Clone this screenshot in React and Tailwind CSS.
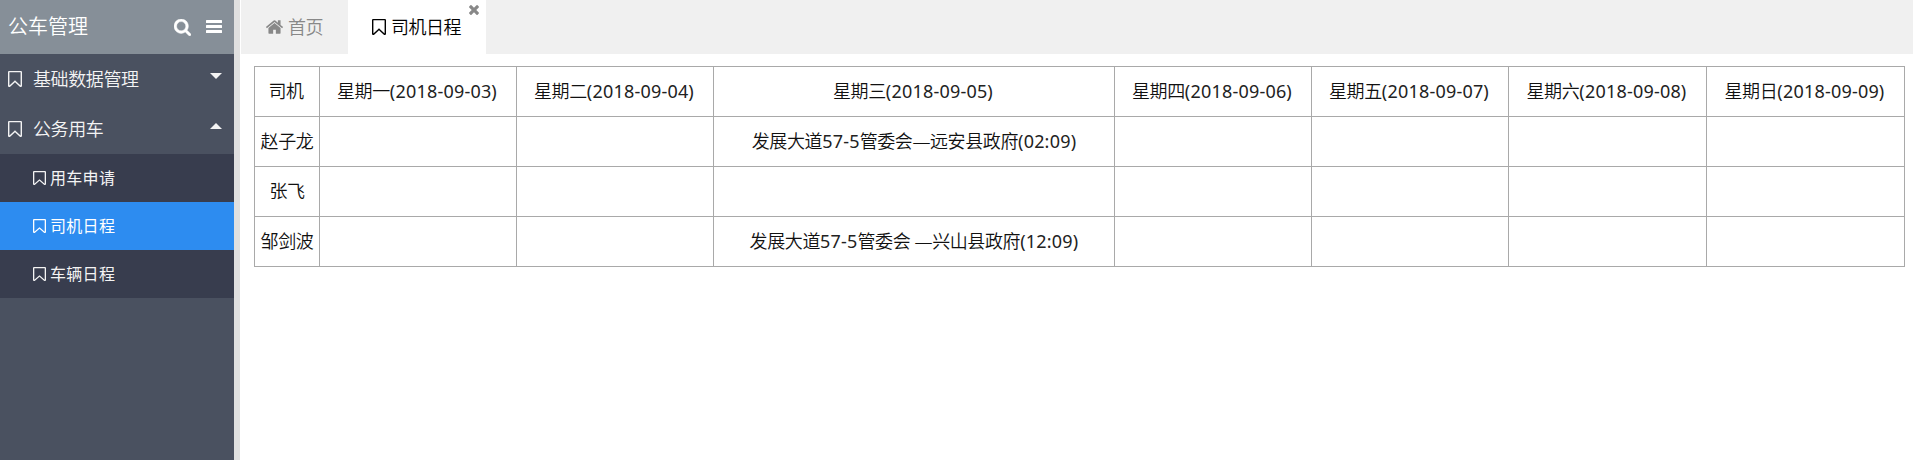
import React from 'react';

const days = [
  { name: '星期一', date: '(2018-09-03)' },
  { name: '星期二', date: '(2018-09-04)' },
  { name: '星期三', date: '(2018-09-05)' },
  { name: '星期四', date: '(2018-09-06)' },
  { name: '星期五', date: '(2018-09-07)' },
  { name: '星期六', date: '(2018-09-08)' },
  { name: '星期日', date: '(2018-09-09)' },
];

const drivers = [
  { name: '赵子龙', trips: { 2: '发展大道57-5管委会—远安县政府(02:09)' } },
  { name: '张飞', trips: {} },
  { name: '邹剑波', trips: { 2: '发展大道57-5管委会 —兴山县政府(12:09)' } },
];

const subMenu = [
  { label: '用车申请', active: false },
  { label: '司机日程', active: true },
  { label: '车辆日程', active: false },
];

const BookmarkIcon = ({ className }) => (
  <svg viewBox="256 128 1280 1512" preserveAspectRatio="none" fill="currentColor" className={className}>
    <path d="M1408 256h-1024v1242l423-406 89-85 89 85 423 406v-1242zm12-128q23 0 44 9 33 13 52.5 41t19.5 62v1289q0 34-19.5 62t-52.5 41q-19 8-44 8-48 0-83-32l-441-424-441 424q-36 33-83 33-23 0-44-9-33-13-52.5-41t-19.5-62v-1289q0-34 19.5-62t52.5-41q21-9 44-9h1048z" />
  </svg>
);

const SearchIcon = ({ className }) => (
  <svg viewBox="64 128 1664 1664" fill="currentColor" stroke="currentColor" strokeWidth="40" className={className}>
    <path d="M1216 832q0-185-131.5-316.5t-316.5-131.5-316.5 131.5-131.5 316.5 131.5 316.5 316.5 131.5 316.5-131.5 131.5-316.5zm512 832q0 52-38 90t-90 38q-54 0-90-38l-343-342q-179 124-399 124-143 0-273.5-55.5t-225-150-150-225-55.5-273.5 55.5-273.5 150-225 225-150 273.5-55.5 273.5 55.5 225 150 150 225 55.5 273.5q0 220-124 399l343 343q37 37 37 90z" />
  </svg>
);

const BarsIcon = ({ className }) => (
  <svg viewBox="0 0 16 13" fill="currentColor" className={className}>
    <rect width="16" height="3" rx="0.5" />
    <rect y="5" width="16" height="3" rx="0.5" />
    <rect y="10" width="16" height="3" rx="0.5" />
  </svg>
);

const HomeIcon = ({ className }) => (
  <svg viewBox="89 253 1614 1283" fill="currentColor" className={className}>
    <path d="M1472 992v480q0 26-19 45t-45 19h-384v-384h-256v384h-384q-26 0-45-19t-19-45v-480q0-1 .5-3t.5-3l575-474 575 474q1 2 1 6zm223-69l-62 74q-8 9-21 11h-3q-13 0-21-7l-692-577-692 577q-12 8-24 7-13-2-21-11l-62-74q-8-10-7-23.5t11-21.5l719-599q32-26 76-26t76 26l244 204v-195q0-14 9-23t23-9h192q14 0 23 9t9 23v408l219 182q10 8 11 21.5t-7 23.5z" />
  </svg>
);

const CloseIcon = ({ className }) => (
  <svg viewBox="302 366 1188 1188" fill="currentColor" className={className}>
    <path d="M1490 1322q0 40-28 68l-136 136q-28 28-68 28t-68-28l-294-294-294 294q-28 28-68 28t-68-28l-136-136q-28-28-28-68t28-68l294-294-294-294q-28-28-28-68t28-68l136-136q28-28 68-28t68 28l294 294 294-294q28-28 68-28t68 28l136 136q28 28 28 68t-28 68l-294 294 294 294q28 28 28 68z" />
  </svg>
);

const Caret = ({ up }) => (
  <svg viewBox="0 0 12 6" fill="currentColor" className="mb-1.5 h-1.5 w-3">
    <path d={up ? 'M0 6L6 0L12 6Z' : 'M0 0L6 6L12 0Z'} />
  </svg>
);

// Latin runs are spaced differently from the Chinese ones
const Mixed = ({ text }) =>
  text.split(/([0-9:()-]+)/).map((part, i) => (
    <span key={i} className={i % 2 ? 'font-normal tracking-[0.2px] text-[#222]' : 'tracking-[-0.4px]'}>
      {part}
    </span>
  ));

const MenuGroup = ({ label, open }) => (
  <div className="flex h-[50px] items-center pb-px pl-2 pr-3">
    <BookmarkIcon className="mr-[11px] h-4 w-[14px]" />
    <span className="flex-1 text-lg tracking-[-0.4px]">{label}</span>
    <Caret up={open} />
  </div>
);

const Sidebar = () => (
  <aside className="w-[234px] shrink-0 bg-[#4a5160] text-[#f4f4f4]">
    <div className="flex h-[54px] items-center bg-[#868f98] pl-2 pr-3 text-white">
      <span className="flex-1 text-xl">公车管理</span>
      <SearchIcon className="mr-[15px] size-[17px]" />
      <BarsIcon className="mb-px h-[13px] w-4" />
    </div>
    <MenuGroup label="基础数据管理" />
    <MenuGroup label="公务用车" open />
    {subMenu.map((item) => (
      <div
        key={item.label}
        className={`flex h-12 items-center pl-[33px] text-base ${item.active ? 'bg-[#2d8cf0] text-white' : 'bg-[#383d4e]'}`}
      >
        <BookmarkIcon className="mr-1 h-[14px] w-[13px]" />
        <span className="font-normal tracking-[0.3px]">{item.label}</span>
      </div>
    ))}
  </aside>
);

const Tabs = () => (
  <div className="ml-px flex h-[54px] bg-[#f0f0f0] text-lg tracking-[-0.5px]">
    <div className="flex w-[107px] items-center pb-px pl-[25px] text-[#888]">
      <HomeIcon className="mr-[5px] h-[14px] w-[17px]" />
      <span>首页</span>
    </div>
    <div className="relative flex w-[138px] items-center bg-white pb-px pl-6 text-black">
      <BookmarkIcon className="mr-[5px] h-4 w-[14px]" />
      <span>司机日程</span>
      <CloseIcon className="absolute right-[7px] top-[5px] size-2.5 text-[#888]" />
    </div>
  </div>
);

const Schedule = () => (
  <table className="ml-[14px] mt-3 w-[1651px] table-fixed border-collapse text-center text-lg text-[#111]">
    <colgroup>
      <col className="w-[65px]" />
      <col className="w-[197px]" />
      <col className="w-[197px]" />
      <col className="w-[401px]" />
      <col className="w-[197px]" />
      <col className="w-[197px]" />
      <col className="w-[198px]" />
      <col className="w-[198px]" />
    </colgroup>
    <tbody>
      <tr className="h-[50px]">
        <td className="border border-[#a9a9a9] pb-0.5 pr-0.5 tracking-[-0.4px]">司机</td>
        {days.map((day) => (
          <td key={day.name} className="whitespace-nowrap border border-[#a9a9a9] pb-0.5 pr-0.5">
            <Mixed text={day.name + day.date} />
          </td>
        ))}
      </tr>
      {drivers.map((driver) => (
        <tr key={driver.name} className="h-[50px]">
          <td className="whitespace-nowrap border border-[#a9a9a9] pb-0.5 tracking-[-0.4px]">{driver.name}</td>
          {days.map((day, i) => (
            <td key={day.name} className="whitespace-nowrap border border-[#a9a9a9] pb-0.5">
              {driver.trips[i] && <Mixed text={driver.trips[i]} />}
            </td>
          ))}
        </tr>
      ))}
    </tbody>
  </table>
);

const App = () => {
  return (
    <div className="flex h-screen overflow-hidden bg-white font-['Noto_Sans','Noto_Sans_CJK_SC',sans-serif] font-[350]">
      <Sidebar />
      <div className="w-1.5 shrink-0 bg-[#e0e0e0]" />
      <main className="min-w-0 flex-1">
        <Tabs />
        <Schedule />
      </main>
    </div>
  );
};

export default App;
